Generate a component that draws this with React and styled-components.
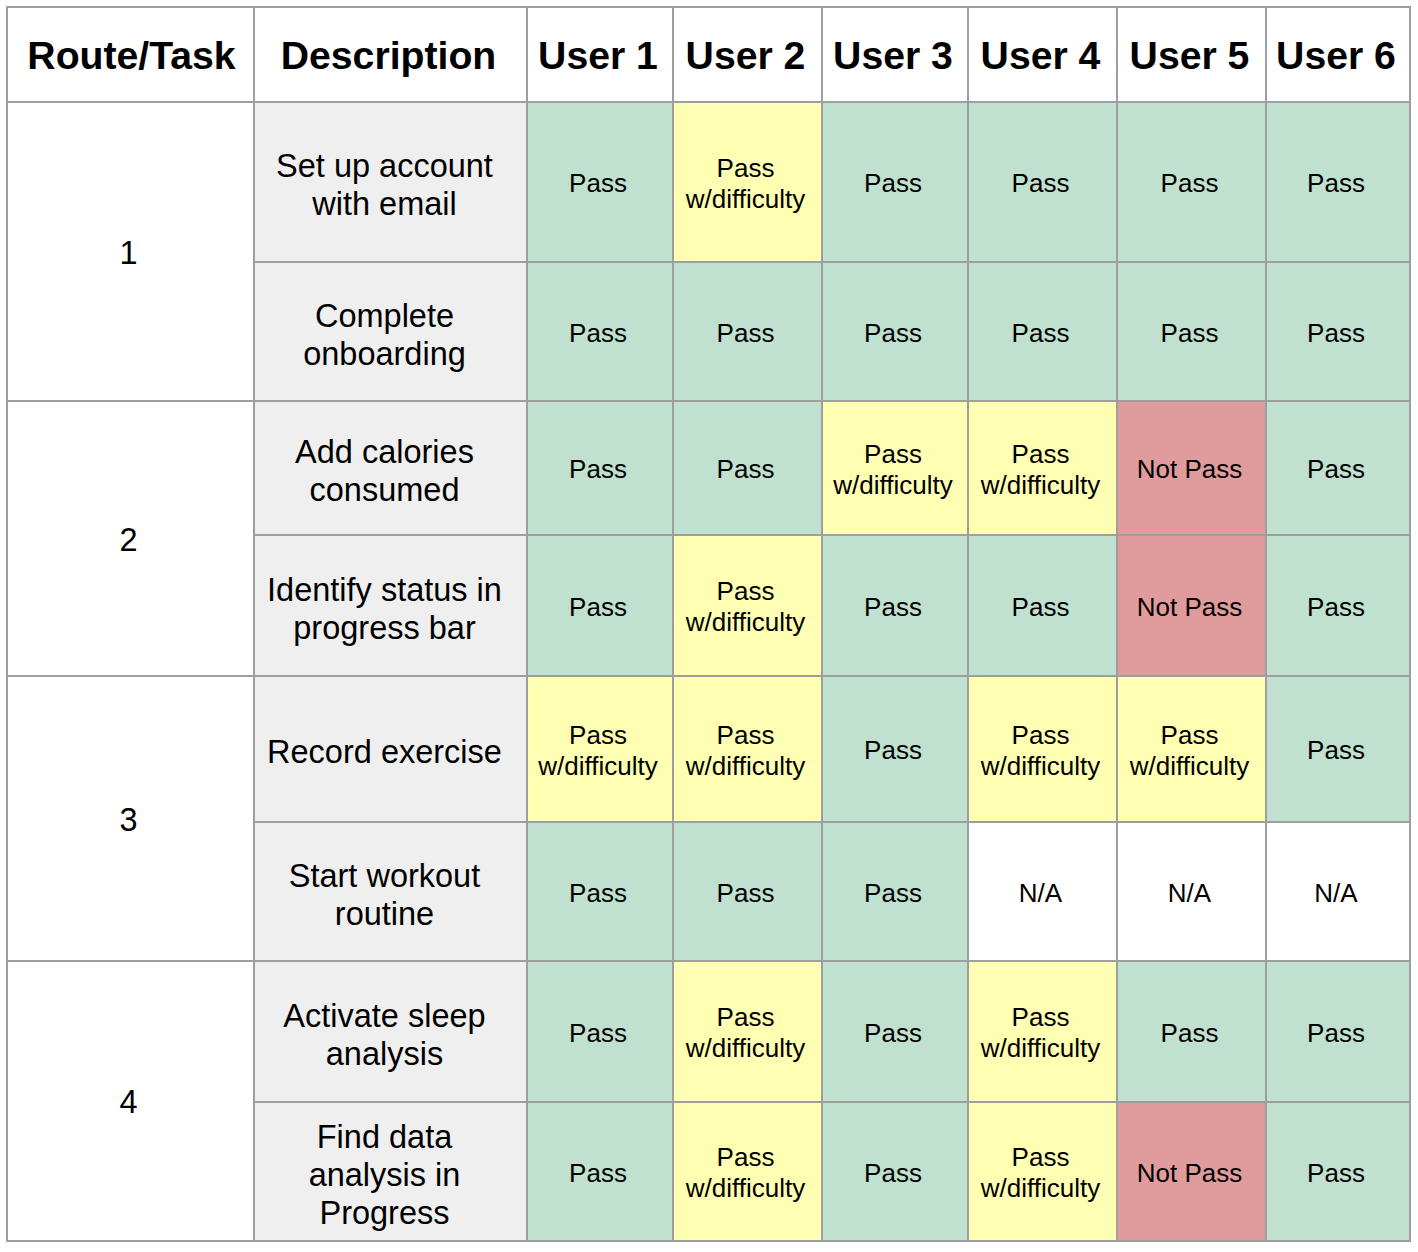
import React from "react";
import styled, { createGlobalStyle } from "styled-components";

const Global = createGlobalStyle`
  html, body { margin: 0; padding: 0; background: #ffffff; }
  body { font-family: "Liberation Sans", Arial, sans-serif; color: #000; }
`;

const Page = styled.div`
  padding: 6px 0 0 6px;
`;

const Grid = styled.div`
  display: inline-grid;
  grid-template-columns: 245px 271px 144px 147px 144px 147px 147px 142px;
  grid-template-rows: 93px 158px 137px 132px 139px 144px 137px 139px 137px;
  gap: 2px;
  padding: 2px;
  background: #9e9e9e;
`;

const Cell = styled.div`
  display: flex;
  align-items: center;
  justify-content: center;
  text-align: center;
  background: #ffffff;
  box-sizing: border-box;
`;

const HeadCell = styled(Cell)`
  font-weight: 700;
  font-size: 39.2px;
  line-height: 44px;
  padding: ${(p) => (p.$first ? "3px 0 0 2px" : "3px 4px 0 0")};
`;

const RouteCell = styled(Cell)`
  grid-row: span 2;
  font-size: 32.5px;
  line-height: 38px;
  padding: 2px 4px 0 0;
`;

const DescCell = styled(Cell)`
  background: #efefef;
  font-size: 32.5px;
  line-height: 38px;
  padding: 6px 14px 0 2px;
`;

const COLORS = {
  pass: "#c0e0d0",
  diff: "#ffffb3",
  fail: "#e09c9c",
  na: "#ffffff",
};

const ResultCell = styled(Cell)`
  background: ${(p) => COLORS[p.$kind]};
  font-size: 26px;
  line-height: 31px;
  padding: 3px 8px 0 4px;
`;

const LABELS = {
  pass: "Pass",
  diff: "Pass w/difficulty",
  fail: "Not Pass",
  na: "N/A",
};

const users = ["User 1", "User 2", "User 3", "User 4", "User 5", "User 6"];

const routes = [
  {
    id: "1",
    tasks: [
      { desc: "Set up account with email", res: ["pass", "diff", "pass", "pass", "pass", "pass"] },
      { desc: "Complete onboarding", res: ["pass", "pass", "pass", "pass", "pass", "pass"] },
    ],
  },
  {
    id: "2",
    tasks: [
      { desc: "Add calories consumed", res: ["pass", "pass", "diff", "diff", "fail", "pass"] },
      { desc: "Identify status in progress bar", res: ["pass", "diff", "pass", "pass", "fail", "pass"] },
    ],
  },
  {
    id: "3",
    tasks: [
      { desc: "Record exercise", res: ["diff", "diff", "pass", "diff", "diff", "pass"] },
      { desc: "Start workout routine", res: ["pass", "pass", "pass", "na", "na", "na"] },
    ],
  },
  {
    id: "4",
    tasks: [
      { desc: "Activate sleep analysis", res: ["pass", "diff", "pass", "diff", "pass", "pass"] },
      { desc: "Find data analysis in Progress", res: ["pass", "diff", "pass", "diff", "fail", "pass"] },
    ],
  },
];

export default function App() {
  return (
    <Page>
      <Global />
      <Grid>
        <HeadCell $first>Route/Task</HeadCell>
        <HeadCell>Description</HeadCell>
        {users.map((u) => (
          <HeadCell key={u}>{u}</HeadCell>
        ))}
        {routes.map((r) =>
          r.tasks.map((t, ti) => (
            <React.Fragment key={r.id + "-" + ti}>
              {ti === 0 && <RouteCell>{r.id}</RouteCell>}
              <DescCell>{t.desc}</DescCell>
              {t.res.map((k, i) => (
                <ResultCell key={i} $kind={k}>
                  {LABELS[k]}
                </ResultCell>
              ))}
            </React.Fragment>
          ))
        )}
      </Grid>
    </Page>
  );
}
